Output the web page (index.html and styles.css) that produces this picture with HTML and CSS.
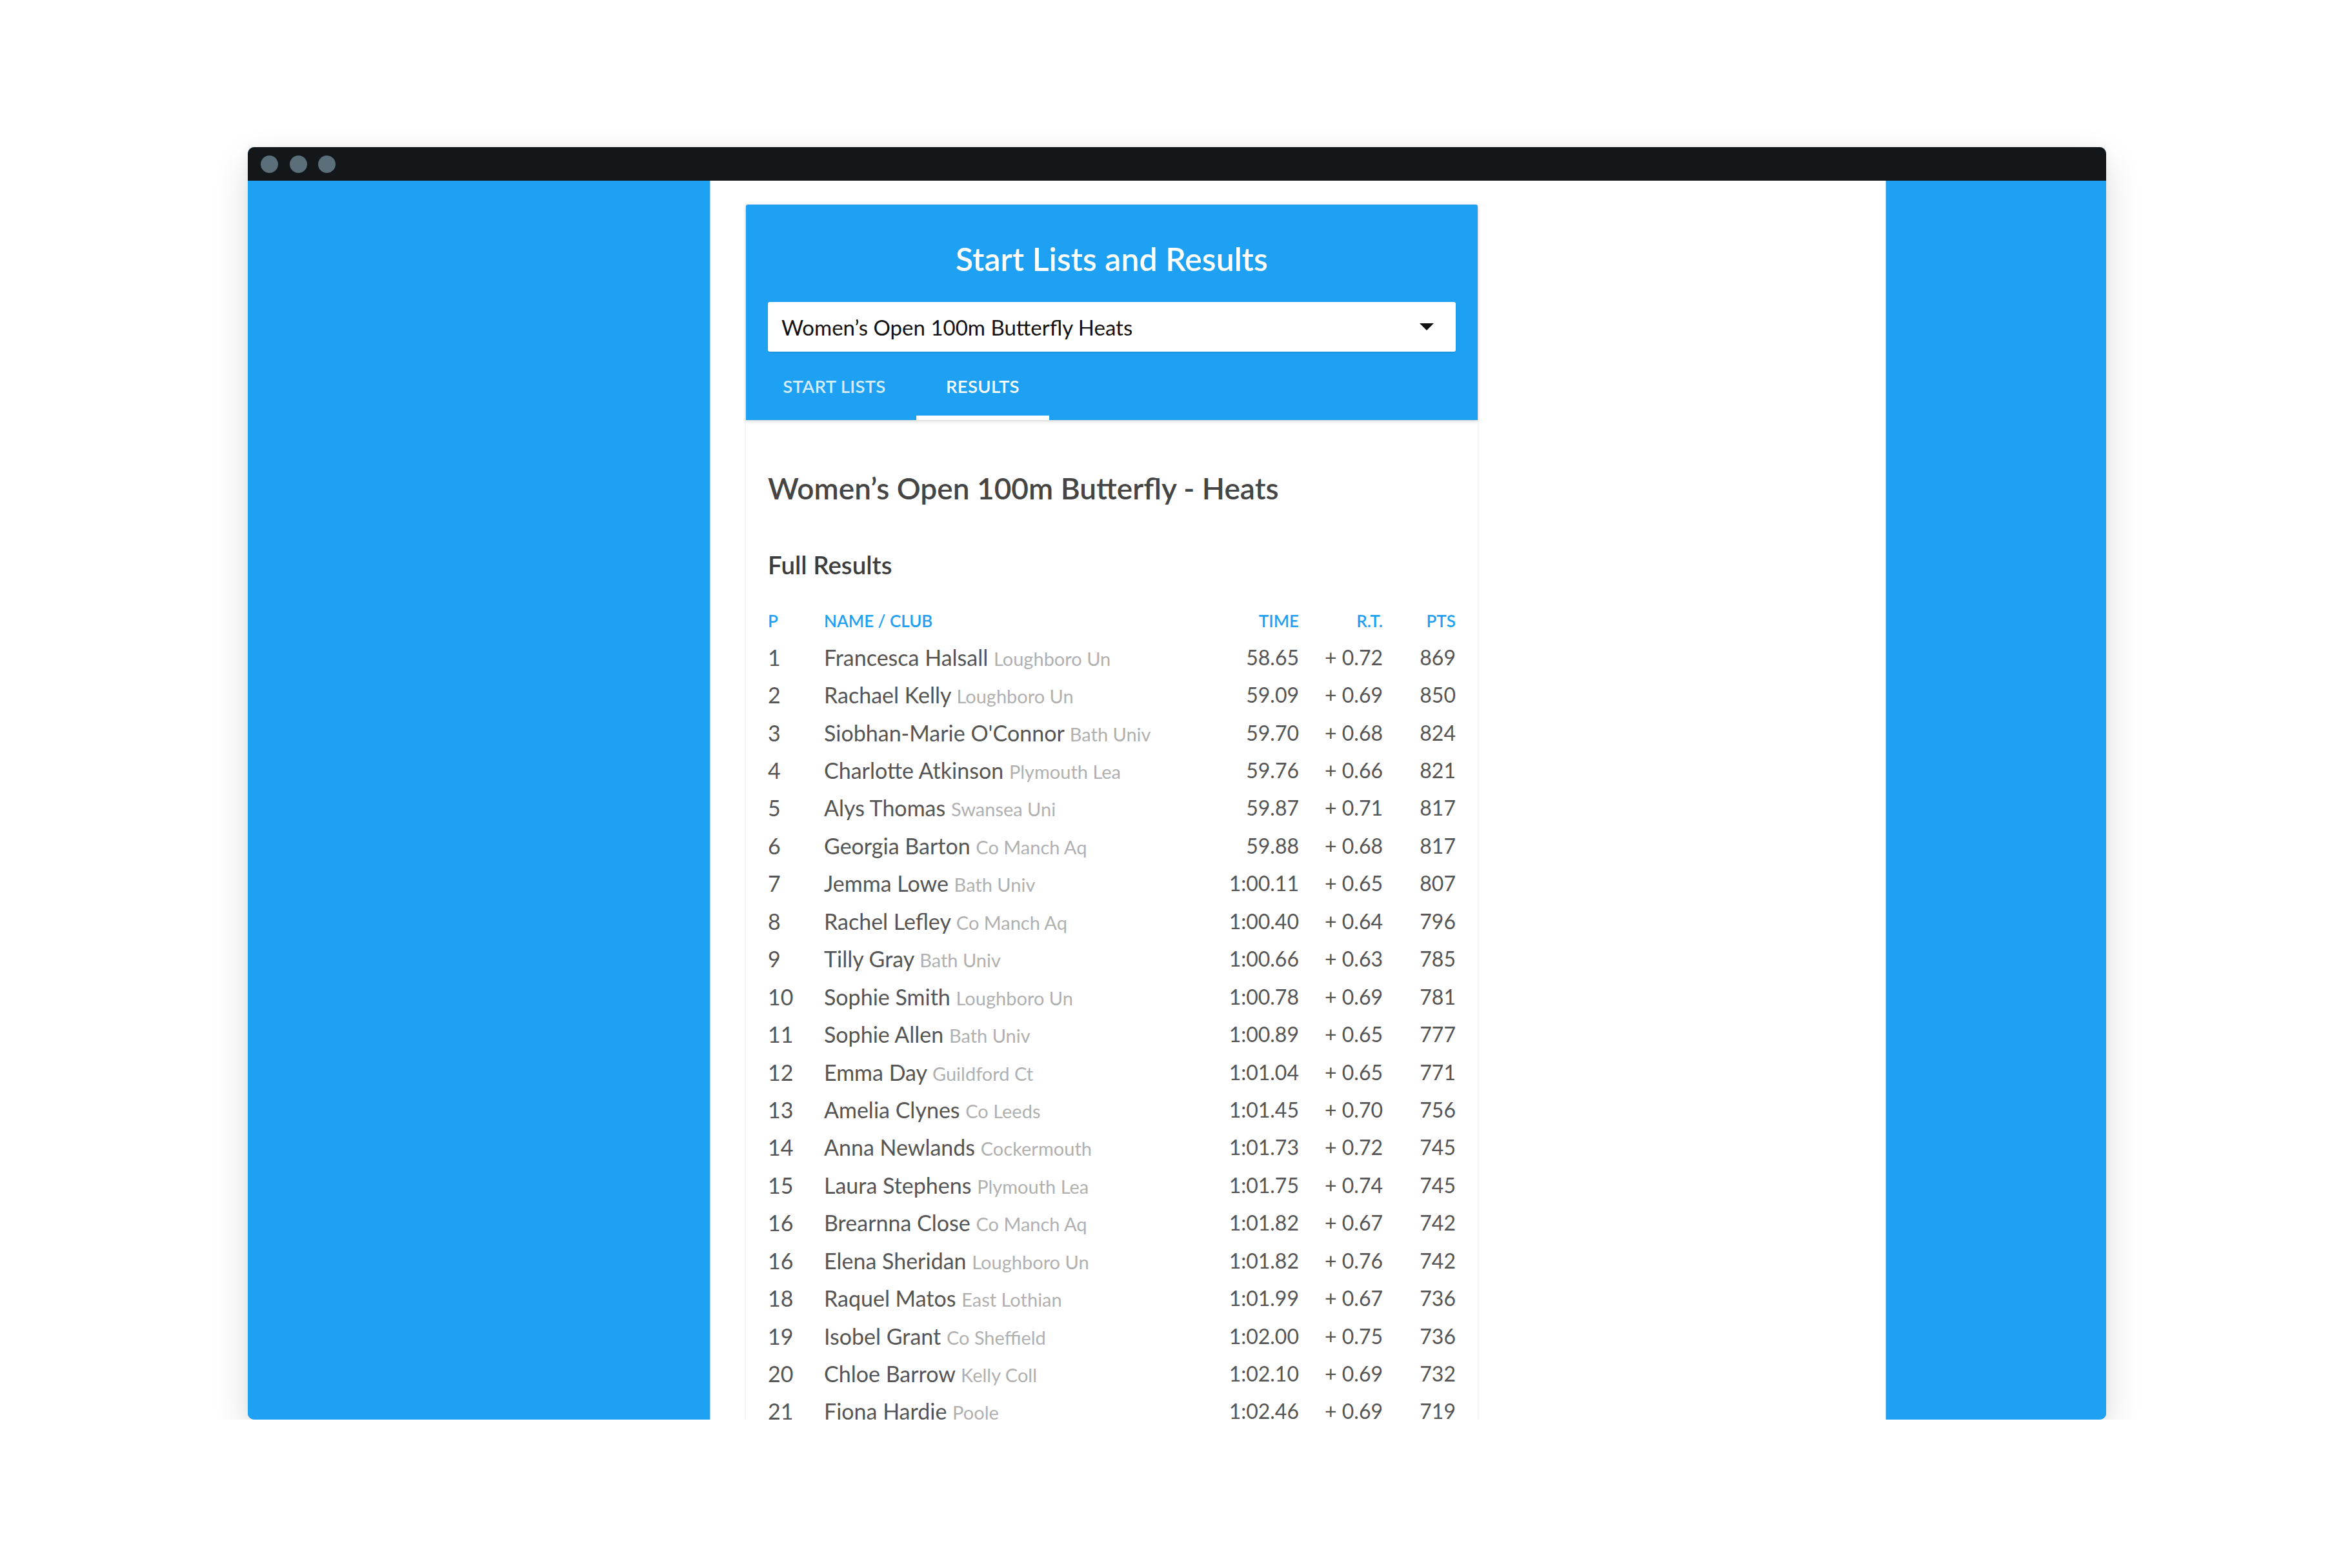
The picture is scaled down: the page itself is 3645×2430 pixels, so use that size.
FILE: index.html
```html
<!DOCTYPE html>
<html lang="en">
<head>
<meta charset="utf-8">
<title>Start Lists and Results</title>
<link rel="stylesheet" href="styles.css">
</head>
<body>
<div class="stage">
  <div class="window">
    <div class="titlebar">
      <span class="dot"></span><span class="dot"></span><span class="dot"></span>
    </div>
    <div class="viewport">
      <div class="side side-left"></div>
      <div class="page">
        <div class="card">
          <div class="card-head">
            <h1 class="title">Start Lists and Results</h1>
            <div class="select">
              <span class="select-text">Women’s Open 100m Butterfly Heats</span>
              <span class="caret"></span>
            </div>
            <div class="tabs">
              <div class="tab">START LISTS</div>
              <div class="tab tab-active">RESULTS</div>
            </div>
          </div>
          <div class="card-body">
            <h2 class="event">Women’s Open 100m Butterfly - Heats</h2>
            <h3 class="sub">Full Results</h3>
            <div class="results">
              <div class="row head">
                <span>P</span><span>NAME / CLUB</span><span class="num">TIME</span><span class="num">R.T.</span><span class="num">PTS</span>
              </div>
              <div class="row"><span>1</span><span class="nm">Francesca Halsall <em>Loughboro Un</em></span><span class="num">58.65</span><span class="num">+ 0.72</span><span class="num">869</span></div>
              <div class="row"><span>2</span><span class="nm">Rachael Kelly <em>Loughboro Un</em></span><span class="num">59.09</span><span class="num">+ 0.69</span><span class="num">850</span></div>
              <div class="row"><span>3</span><span class="nm">Siobhan-Marie O'Connor <em>Bath Univ</em></span><span class="num">59.70</span><span class="num">+ 0.68</span><span class="num">824</span></div>
              <div class="row"><span>4</span><span class="nm">Charlotte Atkinson <em>Plymouth Lea</em></span><span class="num">59.76</span><span class="num">+ 0.66</span><span class="num">821</span></div>
              <div class="row"><span>5</span><span class="nm">Alys Thomas <em>Swansea Uni</em></span><span class="num">59.87</span><span class="num">+ 0.71</span><span class="num">817</span></div>
              <div class="row"><span>6</span><span class="nm">Georgia Barton <em>Co Manch Aq</em></span><span class="num">59.88</span><span class="num">+ 0.68</span><span class="num">817</span></div>
              <div class="row"><span>7</span><span class="nm">Jemma Lowe <em>Bath Univ</em></span><span class="num">1:00.11</span><span class="num">+ 0.65</span><span class="num">807</span></div>
              <div class="row"><span>8</span><span class="nm">Rachel Lefley <em>Co Manch Aq</em></span><span class="num">1:00.40</span><span class="num">+ 0.64</span><span class="num">796</span></div>
              <div class="row"><span>9</span><span class="nm">Tilly Gray <em>Bath Univ</em></span><span class="num">1:00.66</span><span class="num">+ 0.63</span><span class="num">785</span></div>
              <div class="row"><span>10</span><span class="nm">Sophie Smith <em>Loughboro Un</em></span><span class="num">1:00.78</span><span class="num">+ 0.69</span><span class="num">781</span></div>
              <div class="row"><span>11</span><span class="nm">Sophie Allen <em>Bath Univ</em></span><span class="num">1:00.89</span><span class="num">+ 0.65</span><span class="num">777</span></div>
              <div class="row"><span>12</span><span class="nm">Emma Day <em>Guildford Ct</em></span><span class="num">1:01.04</span><span class="num">+ 0.65</span><span class="num">771</span></div>
              <div class="row"><span>13</span><span class="nm">Amelia Clynes <em>Co Leeds</em></span><span class="num">1:01.45</span><span class="num">+ 0.70</span><span class="num">756</span></div>
              <div class="row"><span>14</span><span class="nm">Anna Newlands <em>Cockermouth</em></span><span class="num">1:01.73</span><span class="num">+ 0.72</span><span class="num">745</span></div>
              <div class="row"><span>15</span><span class="nm">Laura Stephens <em>Plymouth Lea</em></span><span class="num">1:01.75</span><span class="num">+ 0.74</span><span class="num">745</span></div>
              <div class="row"><span>16</span><span class="nm">Brearnna Close <em>Co Manch Aq</em></span><span class="num">1:01.82</span><span class="num">+ 0.67</span><span class="num">742</span></div>
              <div class="row"><span>16</span><span class="nm">Elena Sheridan <em>Loughboro Un</em></span><span class="num">1:01.82</span><span class="num">+ 0.76</span><span class="num">742</span></div>
              <div class="row"><span>18</span><span class="nm">Raquel Matos <em>East Lothian</em></span><span class="num">1:01.99</span><span class="num">+ 0.67</span><span class="num">736</span></div>
              <div class="row"><span>19</span><span class="nm">Isobel Grant <em>Co Sheffield</em></span><span class="num">1:02.00</span><span class="num">+ 0.75</span><span class="num">736</span></div>
              <div class="row"><span>20</span><span class="nm">Chloe Barrow <em>Kelly Coll</em></span><span class="num">1:02.10</span><span class="num">+ 0.69</span><span class="num">732</span></div>
              <div class="row"><span>21</span><span class="nm">Fiona Hardie <em>Poole</em></span><span class="num">1:02.46</span><span class="num">+ 0.69</span><span class="num">719</span></div>
            </div>
          </div>
        </div>
      </div>
      <div class="side side-right"></div>
    </div>
  </div>
</div>
</body>
</html>
```

FILE: styles.css
```css
* { box-sizing: border-box; }
html, body { margin: 0; padding: 0; background: #ffffff; }
body { font-family: Lato, "Noto Sans", sans-serif; }

.stage { padding: 228px 0 0 384px; }

.window {
  width: 2880px;
  height: 1972px;
  border-radius: 10px;
  overflow: hidden;
  background: #1ea1f2;
  box-shadow: 0 22px 55px rgba(0, 0, 0, 0.14), 0 0 14px rgba(0, 0, 0, 0.04);
  display: flex;
  flex-direction: column;
}

.titlebar {
  height: 52px;
  flex: none;
  background: #13171a;
  display: flex;
  align-items: center;
  gap: 17.5px;
  padding-left: 20px;
}
.dot { width: 27px; height: 27px; border-radius: 50%; background: #5b6f7b; }

.viewport { flex: 1; display: flex; overflow: hidden; }
.side { background: #1ea1f2; }
.side-left { width: 716px; flex: none; }
.side-right { flex: 1; }

.page {
  width: 1823px;
  flex: none;
  background: #ffffff;
  border-left: 1px solid #9dd3f7;
  border-right: 1px solid #9dd3f7;
  padding: 37px 0 0 55px;
}

.card {
  width: 1134px;
  background: #fff;
  border-radius: 3px 3px 0 0;
  box-shadow: 0 1px 4px rgba(0, 0, 0, 0.12);
}

.card-head {
  position: relative;
  z-index: 1;
  background: #1ea1f2;
  border-radius: 3px 3px 0 0;
  padding: 0 34px;
  box-shadow: 0 2px 5px rgba(0, 0, 0, 0.16);
}
.title {
  margin: 0;
  padding-top: 54px;
  height: 114px;
  line-height: 60px;
  text-align: center;
  color: #fff;
  font-size: 50px;
  font-weight: 600;
}
.select {
  margin-top: 37px;
  height: 77px;
  background: #fff;
  border-radius: 3px;
  box-shadow: 0 1px 2px rgba(0, 0, 0, 0.15);
  display: flex;
  align-items: center;
  justify-content: space-between;
  padding: 0 34px 0 21px;
}
.select-text { font-size: 33px; color: #111; }
.caret {
  width: 0; height: 0;
  border-left: 11px solid transparent;
  border-right: 11px solid transparent;
  border-top: 11px solid #111;
}

.tabs { display: flex; gap: 24px; height: 106px; }
.tab {
  width: 206px;
  display: flex;
  align-items: center;
  justify-content: center;
  color: rgba(255, 255, 255, 0.82);
  font-size: 27.5px;
  font-weight: 600;
  letter-spacing: 0.3px;
  position: relative;
}
.tab-active { color: #fff; }
.tab-active::after {
  content: "";
  position: absolute;
  left: 0; right: 0; bottom: 0;
  height: 7px;
  background: #fff;
}

.card-body { padding: 76px 34px 0 34px; }
.event {
  margin: 0;
  line-height: 60px;
  font-size: 46px;
  font-weight: 600;
  color: #454545;
}
.sub {
  margin: 63px 0 0 0;
  line-height: 50px;
  font-size: 38.5px;
  font-weight: 600;
  color: #3d3d3d;
}

.results { margin-top: 34px; }
.row {
  display: grid;
  grid-template-columns: 87px 1fr 150px 130px 113px;
  align-items: center;
  height: 58.45px;
  font-size: 34px;
  color: #555;
  white-space: nowrap;
}
.row .num { font-size: 32px; }
.row.head {
  height: 55px;
  font-size: 26px;
  font-weight: 600;
  color: #1ea1f2;
}
.row.head .num { font-size: 26px; }
.num { text-align: right; }
.nm em {
  font-style: normal;
  font-size: 29px;
  color: #b0b0b0;
}
```
